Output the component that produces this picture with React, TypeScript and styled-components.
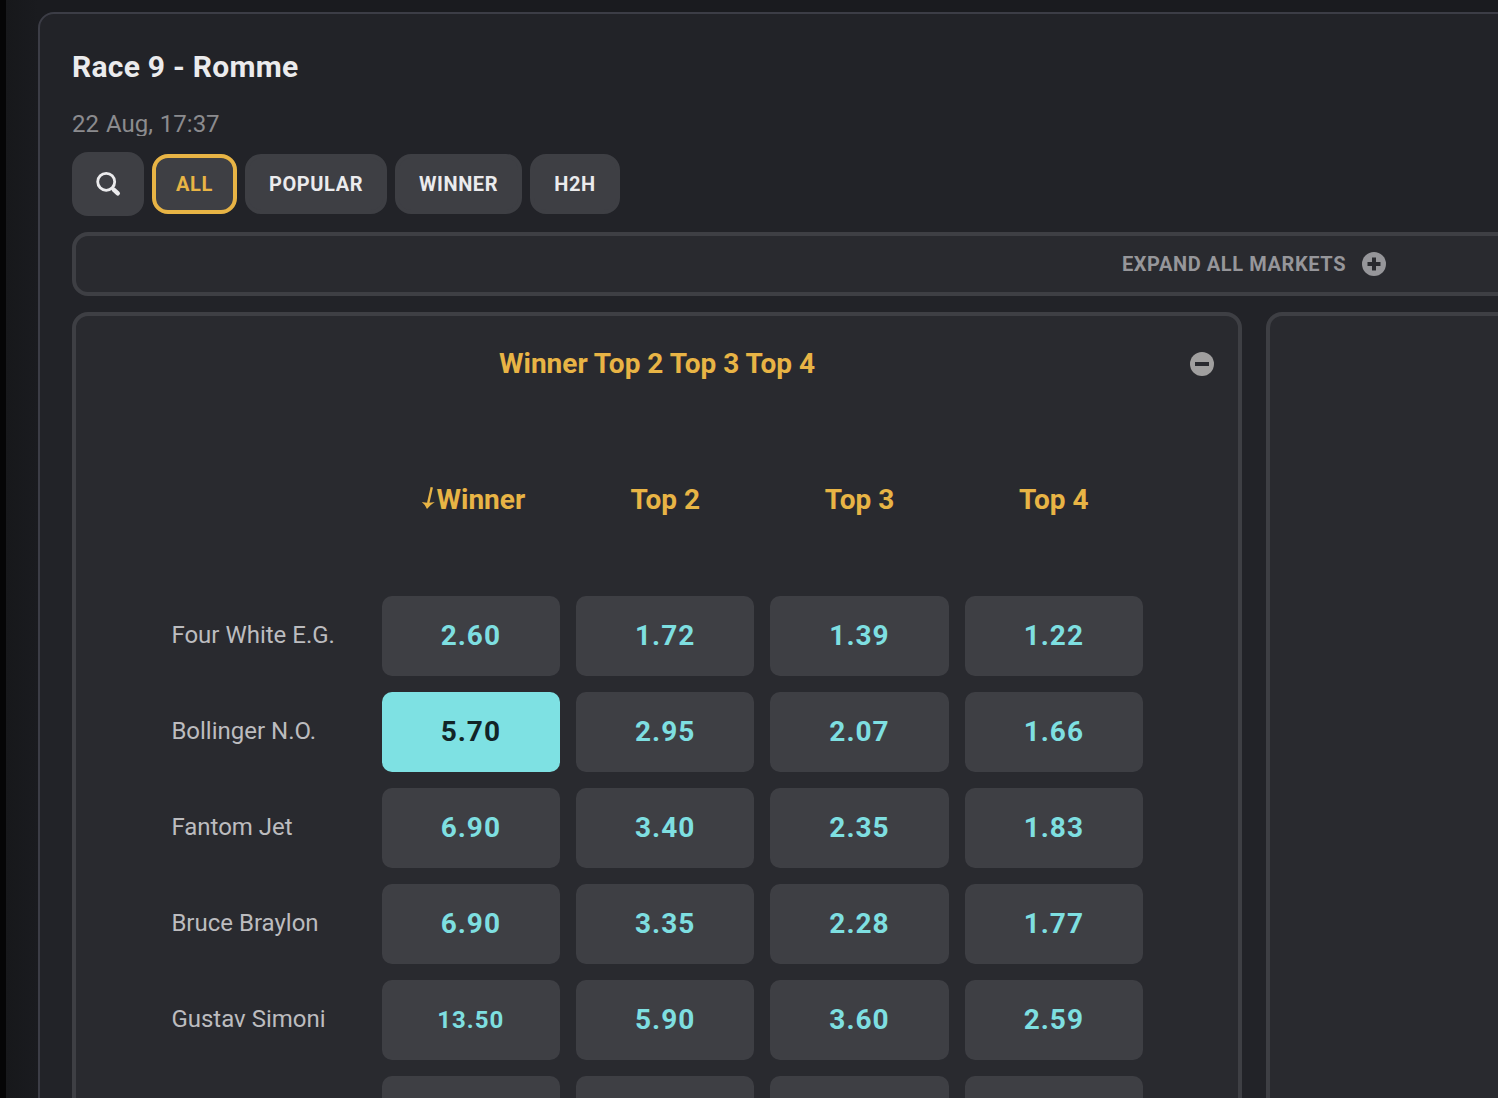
import React from 'react';
import styled, { createGlobalStyle } from 'styled-components';

const GlobalStyle = createGlobalStyle`
  *, *::before, *::after { box-sizing: border-box; }
  html, body { margin: 0; height: 100%; overflow: hidden; background: #17181c; }
  body { font-family: Roboto, "Liberation Sans", sans-serif; }
  button { font-family: inherit; margin: 0; padding: 0; border: 0; cursor: pointer; }
`;

const Page = styled.div`
  width: 100vw;
  height: 100vh;
  overflow: hidden;
  padding: 12px 0 0 32px;
  border-left: 6px solid #050506;
  background: linear-gradient(90deg, #17181b, #1a1b1f 32px);
`;

const Panel = styled.main`
  width: 2432px;
  height: 1400px;
  padding: 32px;
  border: 2px solid #3c3d46;
  border-radius: 16px;
  background: #222328;
`;

const Title = styled.h1`
  margin: 0;
  height: 44px;
  color: #ebebed;
  font-size: 30px;
  font-weight: 700;
  line-height: 41px;
  letter-spacing: 0.25px;
`;

const StartTime = styled.div`
  height: 24px;
  margin-top: 22px;
  overflow: hidden;
  color: #8b8b8e;
  font-size: 24px;
  line-height: 24px;
  word-spacing: 1px;
`;

const Filters = styled.div`
  display: flex;
  align-items: center;
  gap: 8px;
  margin-top: 16px;
  height: 64px;
`;

const SearchButton = styled.button`
  display: grid;
  place-items: center;
  width: 72px;
  height: 64px;
  border-radius: 16px;
  background: #3e3f44;
`;

const FilterButton = styled.button<{ $width: number; $active?: boolean }>`
  width: ${(p) => p.$width}px;
  height: 60px;
  border: 4px solid ${(p) => (p.$active ? '#e8b445' : '#3e3f44')};
  border-radius: 16px;
  background: #3e3f44;
  color: ${(p) => (p.$active ? '#e8b445' : '#ebebed')};
  font-size: 20px;
  font-weight: 700;
  letter-spacing: 0.6px;
`;

const ExpandBar = styled.button`
  display: flex;
  align-items: center;
  justify-content: center;
  gap: 16px;
  width: 100%;
  height: 64px;
  margin-top: 16px;
  border: 4px solid #3e3f44;
  border-radius: 16px;
  background: #292a2f;
  color: #96969a;
  font-size: 20px;
  font-weight: 700;
  letter-spacing: 0.6px;
`;

const Markets = styled.div`
  display: grid;
  grid-template-columns: 1fr 1fr;
  gap: 24px;
  margin-top: 16px;
`;

const Card = styled.section`
  height: 1060px;
  border: 4px solid #3e3f44;
  border-radius: 16px;
  background: #292a2f;
`;

const CardHeader = styled.header`
  display: grid;
  grid-template-columns: 24px 1fr 24px;
  align-items: center;
  height: 96px;
  padding: 0 24px;
`;

const CardTitle = styled.h2`
  grid-column: 2;
  margin: 0;
  color: #e8b445;
  font-size: 28px;
  font-weight: 700;
  line-height: 32px;
  text-align: center;
`;

const CollapseButton = styled.button`
  display: flex;
  background: none;
`;

const Table = styled.div`
  width: 971.6px;
  margin-left: 95.4px;
`;

const Row = styled.div`
  display: grid;
  grid-template-columns: repeat(5, 1fr);
  align-items: center;
  height: 80px;
  margin-bottom: 16px;
`;

const HeadRow = styled(Row)`
  height: 184px;
  margin-bottom: 0;
  padding-bottom: 8px;
`;

const HeadCell = styled.div`
  display: flex;
  align-items: center;
  justify-content: center;
  padding-left: 16px;
  color: #e8b445;
  font-size: 28px;
  font-weight: 700;
  line-height: 32px;
`;

const Runner = styled.div`
  padding-bottom: 2px;
  color: #bcbcbf;
  font-size: 24px;
  line-height: 28px;
  white-space: nowrap;
`;

const Odd = styled.button<{ $selected?: boolean; $small?: boolean }>`
  height: 80px;
  margin-left: 16px;
  padding-bottom: ${(p) => (p.$small ? 0 : 2)}px;
  border-radius: 10px;
  background: ${(p) => (p.$selected ? '#7ee1e3' : '#3e3f44')};
  color: ${(p) => (p.$selected ? '#122427' : '#7edfe1')};
  font-size: ${(p) => (p.$small ? 24 : 28)}px;
  font-weight: 700;
  letter-spacing: 1px;
`;

const SearchIcon = () => (
  <svg width="26" height="26" viewBox="0 0 26 26" fill="none" stroke="#ebebed">
    <circle cx="11.2" cy="10.8" r="8.5" strokeWidth="2.8" />
    <path d="M17.2 17.2L18.8 18.8" strokeWidth="2.8" />
    <path d="M18.7 18.7L22.8 22.4" strokeWidth="4.4" strokeLinecap="round" />
  </svg>
);

const ToggleIcon = ({ open }: { open?: boolean }) => (
  <svg width="24" height="24" viewBox="0 0 24 24">
    <circle cx="12" cy="12" r="12" fill={open ? '#a09f9f' : '#96969a'} />
    <path d={open ? 'M5 12H19' : 'M5.5 12H18.5M12 5.5V18.5'} stroke="#292a2f" strokeWidth="4" />
  </svg>
);

const ArrowIcon = styled.svg`
  margin: 0 0 4px 4px;
`;

const SortArrow = () => (
  <ArrowIcon width="16" height="24" viewBox="0 0 16 24">
    <path d="M10.8 1.2L7.2 17" stroke="#e8b445" strokeWidth="2.4" />
    <path d="M0.8 16Q7.2 17.6 13.8 16Q9.2 18.8 6 23Q4.4 18.8 0.8 16Z" fill="#e8b445" />
  </ArrowIcon>
);

const filters = [
  { label: 'ALL', width: 85 },
  { label: 'POPULAR', width: 142 },
  { label: 'WINNER', width: 127 },
  { label: 'H2H', width: 90 },
];

const columns = ['Winner', 'Top 2', 'Top 3', 'Top 4'];

const runners = [
  { name: 'Four White E.G.', odds: ['2.60', '1.72', '1.39', '1.22'] },
  { name: 'Bollinger N.O.', odds: ['5.70', '2.95', '2.07', '1.66'] },
  { name: 'Fantom Jet', odds: ['6.90', '3.40', '2.35', '1.83'] },
  { name: 'Bruce Braylon', odds: ['6.90', '3.35', '2.28', '1.77'] },
  { name: 'Gustav Simoni', odds: ['13.50', '5.90', '3.60', '2.59'] },
  { name: '', odds: ['', '', '', ''] },
];

export default function App() {
  return (
    <>
      <GlobalStyle />
      <Page>
        <Panel>
          <Title>Race 9 - Romme</Title>
          <StartTime>22 Aug, 17:37</StartTime>
          <Filters>
            <SearchButton aria-label="Search">
              <SearchIcon />
            </SearchButton>
            {filters.map((f, i) => (
              <FilterButton key={f.label} $width={f.width} $active={i === 0}>
                {f.label}
              </FilterButton>
            ))}
          </Filters>
          <ExpandBar>
            EXPAND ALL MARKETS
            <ToggleIcon />
          </ExpandBar>
          <Markets>
            <Card>
              <CardHeader>
                <CardTitle>Winner Top 2 Top 3 Top 4</CardTitle>
                <CollapseButton aria-label="Collapse">
                  <ToggleIcon open />
                </CollapseButton>
              </CardHeader>
              <Table>
                <HeadRow>
                  <span />
                  {columns.map((c, i) => (
                    <HeadCell key={c}>
                      {i === 0 && <SortArrow />}
                      {c}
                    </HeadCell>
                  ))}
                </HeadRow>
                {runners.map((r, ri) => (
                  <Row key={ri}>
                    <Runner>{r.name}</Runner>
                    {r.odds.map((o, oi) => (
                      <Odd key={oi} $selected={ri === 1 && oi === 0} $small={o.length > 4}>
                        {o}
                      </Odd>
                    ))}
                  </Row>
                ))}
              </Table>
            </Card>
            <Card />
          </Markets>
        </Panel>
      </Page>
    </>
  );
}
